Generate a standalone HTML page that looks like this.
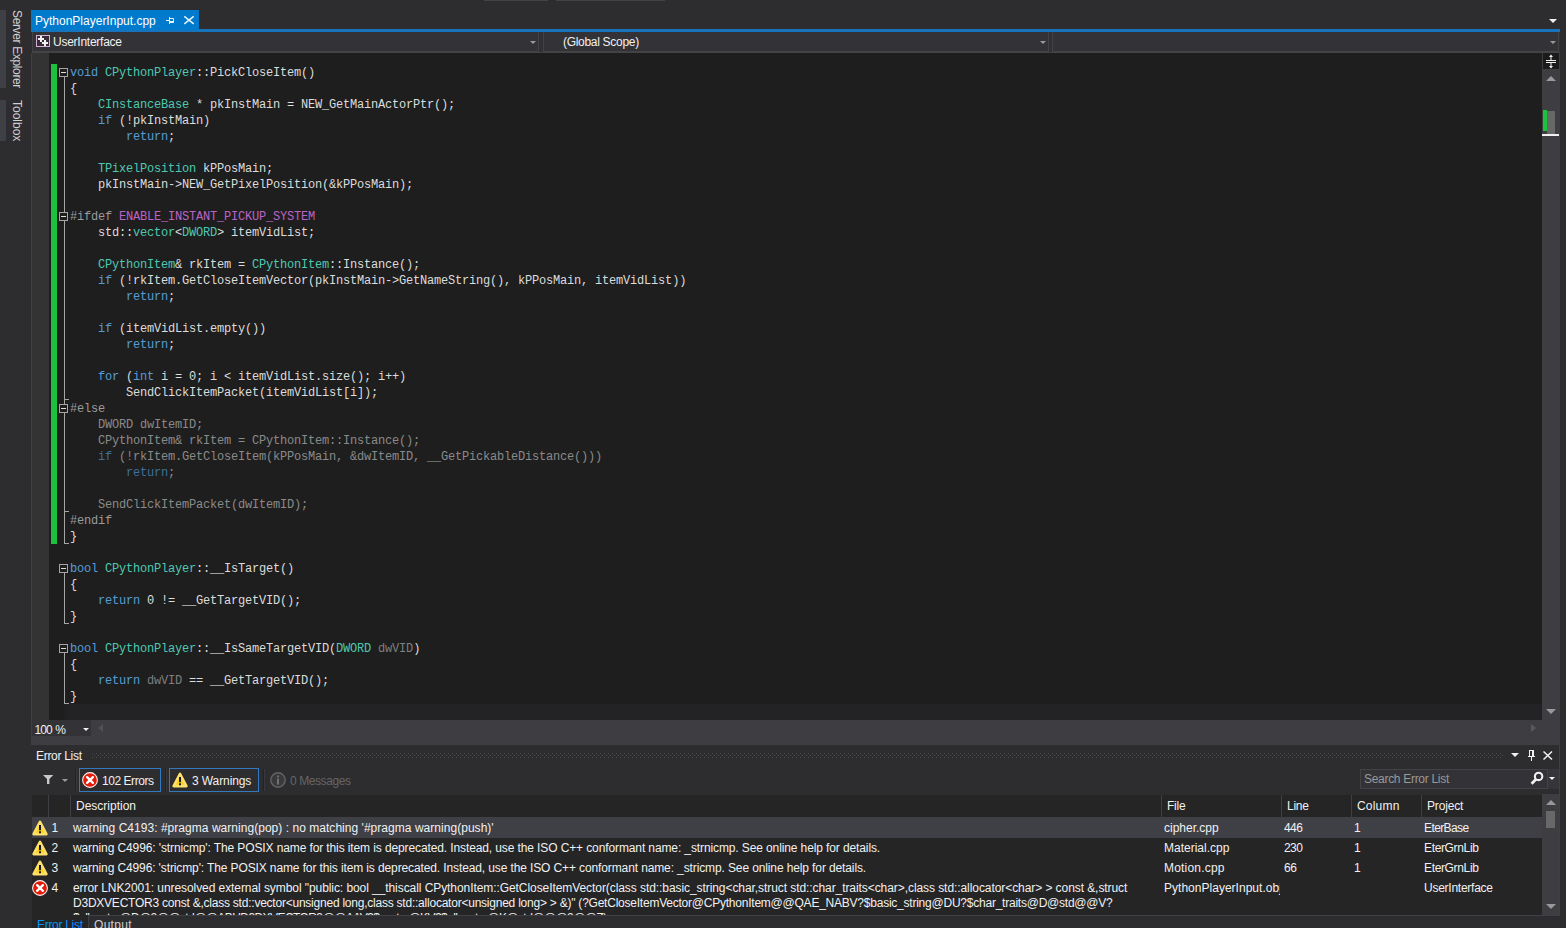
<!DOCTYPE html>
<html lang="en">
<head>
<meta charset="utf-8">
<title>PythonPlayerInput.cpp</title>
<style>
*{box-sizing:border-box;margin:0;padding:0}
html,body{width:1566px;height:928px;overflow:hidden;background:#2d2d30}
body{position:relative;font-family:"Liberation Sans",sans-serif;font-size:12px;color:#f1f1f1}
.abs{position:absolute}
.ui{position:absolute;white-space:nowrap;line-height:16px;font-size:12px;color:#f1f1f1}
/* side strip */
.sidebar{position:absolute;left:0;width:6px;background:#3f3f46}
.vtext{position:absolute;transform-origin:0 0;transform:rotate(90deg);white-space:nowrap;font-size:12px;line-height:16px;color:#d0d0d0}
/* editor */
#editor{position:absolute;left:49px;top:53px;width:1493px;height:667px;background:#1e1e1e;overflow:hidden}
#margin{position:absolute;left:31px;top:53px;width:18px;height:667px;background:#333333;border-left:1px solid #3f3f46}
.code{position:absolute;left:21px;top:12px;font-family:"Liberation Mono",monospace;font-size:12px;letter-spacing:-0.2px;line-height:16px;color:#dcdcdc;white-space:pre}
.code div{height:16px}
.k{color:#569cd6}.t{color:#4ec9b0}.m{color:#bd63c5}.g{color:#9b9b9b}.p{color:#7f7f7f}
.ia{color:#8a8a8a}.ia .k{color:#3f6f9a}
.ob{position:absolute;width:9px;height:9px;border:1px solid #a5a5a5;background:#1e1e1e}
.ob:after{content:"";position:absolute;left:1px;top:3px;width:5px;height:1px;background:#dcdcdc}
.ol{position:absolute;width:1px;background:#a5a5a5}

.tri-d{position:absolute;width:0;height:0;border-left:4px solid transparent;border-right:4px solid transparent;border-top:4px solid #999}
.tri-u{position:absolute;width:0;height:0;border-left:5px solid transparent;border-right:5px solid transparent;border-bottom:5px solid #999}
.combo{position:absolute;top:32px;height:20px;background:#333337;border:1px solid #434346;border-top:none}
.sb{position:absolute;background:#3e3e42}
.thumb{position:absolute;background:#686868}

#el{position:absolute;left:31px;top:745px;width:1529px;height:171px;background:#2d2d30;border-right:1px solid #3f3f46}
.btn{position:absolute;top:768px;height:24px;border:1px solid #3379c0;background:#2d2d30}
.vsep{position:absolute;width:1px;background:#3f3f46}
#list{position:absolute;left:32px;top:795px;width:1510px;height:120px;background:#252526;overflow:hidden}
.hdr{position:absolute;top:0;height:22px;border-left:1px solid #3f3f46}
.row{position:absolute;left:0;width:1510px}
.cell{position:absolute;white-space:nowrap;font-size:12px;line-height:15px;color:#f1f1f1}
</style>
</head>
<body>
<!-- left auto-hide strip -->
<div class="sidebar" style="top:10px;height:78px"></div>
<div class="sidebar" style="top:100px;height:41px"></div>
<div class="vtext" style="left:25px;top:10px;letter-spacing:-0.36px">Server Explorer</div>
<div class="vtext" style="left:25px;top:100px">Toolbox</div>

<!-- toolbar combo bottoms -->
<div class="abs" style="left:484px;top:0;width:64px;height:1px;background:#434346"></div>
<div class="abs" style="left:556px;top:0;width:109px;height:1px;background:#434346"></div>

<!-- document tab -->
<div class="abs" style="left:31px;top:29px;width:1529px;height:3px;background:#1873bd"></div>
<div class="abs" id="tab" style="left:31px;top:10px;width:168px;height:20px;background:#007acc"></div>
<div class="ui" id="tabtxt" style="left:35px;top:13px;color:#fff">PythonPlayerInput.cpp</div>


<!-- tab icons -->
<svg class="abs" style="left:164px;top:14px" width="34" height="13" viewBox="0 0 34 13">
<g fill="none" stroke="#e6f3fb" stroke-width="1">
<path d="M2 6.5H5.5M5.5 3V10M5.5 4.5H9.5V8.5H5.5M5.5 7.5H9.5"/>
<path d="M20.3 2.3L29.7 9.9M29.7 2.3L20.3 9.9" stroke-width="1.5"/>
</g></svg>
<!-- tab well overflow arrow -->
<div class="tri-d" style="left:1549px;top:19px;border-top-color:#f1f1f1"></div>
<!-- nav bar -->
<div class="abs" id="nav" style="left:32px;top:32px;width:1528px;height:21px;background:#313135;border-bottom:1px solid #434346"></div>
<div class="combo" style="left:32px;width:507px"></div>
<div class="combo" style="left:543px;width:506px"></div>
<div class="combo" style="left:1052px;width:507px"></div>
<div class="tri-d" style="left:530px;top:41px;border-width:3.5px 3.5px 0 3.5px"></div>
<div class="tri-d" style="left:1040px;top:41px;border-width:3.5px 3.5px 0 3.5px"></div>
<div class="tri-d" style="left:1550px;top:41px;border-width:3.5px 3.5px 0 3.5px"></div>
<!-- project icon -->
<svg class="abs" style="left:36px;top:35px" width="14" height="12" viewBox="0 0 14 12">
<rect x="0.5" y="0.5" width="13" height="11" fill="#392b3a" stroke="#d3b0d6"/>
<path d="M4 1h2v2h2v2h-2v2h-2v-2h-2v-2h2zM8 5h2v2h2v2h-2v2h-2v-2h-2v-2h2z" fill="#f1f1f1"/>
</svg>
<div class="ui" style="left:53px;top:34px;letter-spacing:-0.25px">UserInterface</div>
<div class="ui" style="left:563px;top:34px;letter-spacing:-0.3px">(Global Scope)</div>

<!-- editor -->
<div id="margin"></div>
<div id="editor">
<div class="abs" style="left:2px;top:11px;width:6px;height:480px;background:#1cc23d"></div>
<div class="ol" style="left:15px;top:24px;height:467px"></div>
<div class="ob" style="left:10px;top:15px"></div>
<div class="ob" style="left:10px;top:159px"></div>
<div class="ob" style="left:10px;top:351px"></div>
<div class="ol" style="left:15px;top:346px;width:5px;height:1px"></div>
<div class="ol" style="left:15px;top:458px;width:5px;height:1px"></div>
<div class="ol" style="left:15px;top:490px;width:5px;height:1px"></div>
<div class="ol" style="left:15px;top:520px;height:51px"></div>
<div class="ob" style="left:10px;top:511px"></div>
<div class="ol" style="left:15px;top:570px;width:5px;height:1px"></div>
<div class="ol" style="left:15px;top:600px;height:51px"></div>
<div class="ob" style="left:10px;top:591px"></div>
<div class="ol" style="left:15px;top:650px;width:5px;height:1px"></div>
<div class="abs" style="left:13px;top:651px;width:1480px;height:16px;background:linear-gradient(90deg,#1e1e1e 0,#232325 8px)"></div>
<div class="code" id="code"><div><span class="k">void</span> <span class="t">CPythonPlayer</span>::PickCloseItem()</div><div>{</div><div>    <span class="t">CInstanceBase</span> * pkInstMain = NEW_GetMainActorPtr();</div><div>    <span class="k">if</span> (!pkInstMain)</div><div>        <span class="k">return</span>;</div><div></div><div>    <span class="t">TPixelPosition</span> kPPosMain;</div><div>    pkInstMain-&gt;NEW_GetPixelPosition(&amp;kPPosMain);</div><div></div><div><span class="g">#ifdef</span> <span class="m">ENABLE_INSTANT_PICKUP_SYSTEM</span></div><div>    std::<span class="t">vector</span>&lt;<span class="t">DWORD</span>&gt; itemVidList;</div><div></div><div>    <span class="t">CPythonItem</span>&amp; rkItem = <span class="t">CPythonItem</span>::Instance();</div><div>    <span class="k">if</span> (!rkItem.GetCloseItemVector(pkInstMain-&gt;GetNameString(), kPPosMain, itemVidList))</div><div>        <span class="k">return</span>;</div><div></div><div>    <span class="k">if</span> (itemVidList.empty())</div><div>        <span class="k">return</span>;</div><div></div><div>    <span class="k">for</span> (<span class="k">int</span> i = 0; i &lt; itemVidList.size(); i++)</div><div>        SendClickItemPacket(itemVidList[i]);</div><div><span class="g">#else</span></div><div class="ia">    DWORD dwItemID;</div><div class="ia">    CPythonItem&amp; rkItem = CPythonItem::Instance();</div><div class="ia">    <span class="k">if</span> (!rkItem.GetCloseItem(kPPosMain, &amp;dwItemID, __GetPickableDistance()))</div><div class="ia">        <span class="k">return</span>;</div><div></div><div class="ia">    SendClickItemPacket(dwItemID);</div><div><span class="g">#endif</span></div><div>}</div><div></div><div><span class="k">bool</span> <span class="t">CPythonPlayer</span>::__IsTarget()</div><div>{</div><div>    <span class="k">return</span> 0 != __GetTargetVID();</div><div>}</div><div></div><div><span class="k">bool</span> <span class="t">CPythonPlayer</span>::__IsSameTargetVID(<span class="t">DWORD</span> <span class="p">dwVID</span>)</div><div>{</div><div>    <span class="k">return</span> <span class="p">dwVID</span> == __GetTargetVID();</div><div>}</div></div>
</div>

<!-- vertical scrollbar -->
<div class="sb" style="left:1542px;top:53px;width:18px;height:667px"></div>
<div class="abs" style="left:1543px;top:53px;width:16px;height:16px;background:#1b1b1c"></div>
<svg class="abs" style="left:1543px;top:53px" width="16" height="16" viewBox="0 0 16 16">
<g stroke="#f1f1f1" fill="#f1f1f1">
<path d="M3 7.5H13M3 9.5H13" stroke-width="1"/>
<path d="M8 3V7M8 10V14" stroke-width="1"/>
<path d="M8 1.5L10 4H6ZM8 15.5L10 13H6Z" stroke="none"/>
</g></svg>
<div class="tri-u" style="left:1546px;top:76px"></div>
<div class="thumb" style="left:1547px;top:111px;width:8px;height:23px"></div>
<div class="abs" style="left:1543px;top:110px;width:4px;height:21px;background:#1cc23d"></div>
<div class="abs" style="left:1542px;top:134px;width:17px;height:2px;background:#f1f1f1"></div>
<div class="tri-d" style="left:1546px;top:709px;border-left-width:5px;border-right-width:5px;border-top-width:5px"></div>

<!-- bottom bar: zoom + hscroll -->
<div class="sb" style="left:31px;top:720px;width:1529px;height:25px"></div>
<div class="abs" style="left:32px;top:720px;width:59px;height:16px;background:#333337"></div>
<div class="ui" style="left:34.5px;top:722px;letter-spacing:-0.9px;word-spacing:1px">100 %</div>
<div class="tri-d" style="left:83px;top:728px;border-width:3px 3px 0 3px;border-top-color:#f1f1f1"></div>
<div class="abs" style="left:98px;top:724px;width:0;height:0;border-top:4px solid transparent;border-bottom:4px solid transparent;border-right:5px solid #505055"></div>
<div class="abs" style="left:1531px;top:724px;width:0;height:0;border-top:4.5px solid transparent;border-bottom:4.5px solid transparent;border-left:5px solid #58585e"></div>

<!-- Error List tool window -->
<div id="el"></div>
<div class="ui" style="left:36px;top:748px;letter-spacing:-0.3px">Error List</div>
<svg class="abs" style="left:92px;top:753px" width="1412" height="5"><defs><pattern id="dots" width="4" height="4" patternUnits="userSpaceOnUse"><rect x="0" y="0" width="1" height="1" fill="#48484d"/><rect x="2" y="2" width="1" height="1" fill="#48484d"/></pattern></defs><rect width="1412" height="5" fill="url(#dots)"/></svg>
<div class="tri-d" style="left:1511px;top:753px;border-top-color:#f1f1f1"></div>
<svg class="abs" style="left:1525px;top:749px" width="30" height="13" viewBox="0 0 30 13"><g fill="none" stroke="#f1f1f1"><path d="M4 1.5H9M4.5 1.5V7.5M7.5 1.5V7.5M8.5 1.5V7.5M3 7.5H10M6.5 7.5V12"/><path d="M18.5 2.5L27 10.5M27 2.5L18.5 10.5" stroke-width="1.5"/></g></svg>

<!-- toolbar -->
<svg class="abs" style="left:43px;top:774px" width="11" height="11" viewBox="0 0 11 11"><path d="M0 1H10.3L6.4 5V10H4V5Z" fill="#c8c8c8"/></svg>
<div class="tri-d" style="left:62px;top:779px;border-left-width:3px;border-right-width:3px;border-top-width:3px"></div>
<div class="vsep" style="left:75px;top:769px;height:22px;background:#222224"></div><div class="vsep" style="left:76px;top:769px;height:22px;background:#39393d"></div>
<div class="btn" style="left:79px;width:82px"></div>
<svg class="abs" style="left:82px;top:772px" width="16" height="16" viewBox="0 0 16 16"><circle cx="8" cy="8" r="7.4" fill="#e21c08" stroke="#fbeeee" stroke-width="1.1"/><path d="M5.1 5.1L10.9 10.9M10.9 5.1L5.1 10.9" stroke="#fff" stroke-width="2.3" stroke-linecap="round"/></svg>
<div class="ui" style="left:102px;top:773px;letter-spacing:-0.45px">102 Errors</div>
<div class="vsep" style="left:165px;top:769px;height:22px;background:#222224"></div><div class="vsep" style="left:166px;top:769px;height:22px;background:#39393d"></div>
<div class="btn" style="left:169px;width:90px"></div>
<svg class="abs" style="left:172px;top:772px" width="16" height="16" viewBox="0 0 16 16"><path d="M8 1.9L14.4 14.1H1.6Z" fill="#fcd116" stroke="#fddf6a" stroke-width="2.6" stroke-linejoin="round"/><path d="M7 5h2v5.2h-2zM7 11.3h2v2h-2z" fill="#1b1b1c"/></svg>
<div class="ui" style="left:192px;top:773px;letter-spacing:-0.1px">3 Warnings</div>
<div class="vsep" style="left:263px;top:769px;height:22px;background:#222224"></div><div class="vsep" style="left:264px;top:769px;height:22px;background:#39393d"></div>
<svg class="abs" style="left:270px;top:772px" width="16" height="16" viewBox="0 0 16 16"><circle cx="8" cy="8" r="7.2" fill="#39393c" stroke="#646466" stroke-width="1.4"/><path d="M7.1 6.4h1.8v6h-1.8zM7.1 3.4h1.8v1.8h-1.8z" fill="#77777a"/></svg>
<div class="ui" style="left:290px;top:773px;color:#656565;letter-spacing:-0.42px">0 Messages</div>
<!-- search box -->
<div class="abs" style="left:1360px;top:769px;width:188px;height:20px;background:#333337;border:1px solid #434346"></div>
<div class="ui" style="left:1364px;top:771px;color:#999;letter-spacing:-0.3px">Search Error List</div>
<svg class="abs" style="left:1530px;top:771px" width="14" height="15" viewBox="0 0 14 15"><circle cx="8.6" cy="5.4" r="3.7" fill="none" stroke="#f1f1f1" stroke-width="2.1"/><path d="M6.2 8L1.6 12.8" stroke="#f1f1f1" stroke-width="2.7"/></svg>
<div class="abs" style="left:1548px;top:769px;width:11px;height:20px;background:#36363a"></div>
<div class="tri-d" style="left:1548.5px;top:776.5px;border-width:3.5px 3.2px 0 3.2px;border-top-color:#f1f1f1"></div>

<!-- list -->
<div id="list">
<div class="hdr" style="left:16px;width:22px"></div>
<div class="hdr" style="left:38px;width:1091px"><span class="cell" style="left:5px;top:4px">Description</span></div>
<div class="hdr" style="left:1129px;width:120px"><span class="cell" style="left:5px;top:4px;letter-spacing:-0.25px">File</span></div>
<div class="hdr" style="left:1249px;width:70px"><span class="cell" style="left:5px;top:4px;letter-spacing:-0.25px">Line</span></div>
<div class="hdr" style="left:1319px;width:70px"><span class="cell" style="left:5px;top:4px;letter-spacing:0.2px">Column</span></div>
<div class="hdr" style="left:1389px;width:121px"><span class="cell" style="left:5px;top:4px;letter-spacing:-0.15px">Project</span></div>
<div class="row" style="top:22px;height:21px;background:#3f3f46"></div>
<svg class="abs" style="left:0px;top:25px" width="16" height="16" viewBox="0 0 16 16"><path d="M8 1.9L14.4 14.1H1.6Z" fill="#fcd116" stroke="#fddf6a" stroke-width="2.6" stroke-linejoin="round"/><path d="M7 5h2v5.2h-2zM7 11.3h2v2h-2z" fill="#1b1b1c"/></svg>
<span class="cell" style="left:19.4px;top:26px">1</span>
<span class="cell" id="r1" style="left:41px;top:26px;letter-spacing:0.035px">warning C4193: #pragma warning(pop) : no matching '#pragma warning(push)'</span>
<span class="cell" style="left:1132px;top:26px">cipher.cpp</span>
<span class="cell" style="left:1252px;top:26px;letter-spacing:-0.6px">446</span>
<span class="cell" style="left:1322px;top:26px">1</span>
<span class="cell" style="left:1392px;top:26px;letter-spacing:-0.6px">EterBase</span>
<svg class="abs" style="left:0px;top:45px" width="16" height="16" viewBox="0 0 16 16"><path d="M8 1.9L14.4 14.1H1.6Z" fill="#fcd116" stroke="#fddf6a" stroke-width="2.6" stroke-linejoin="round"/><path d="M7 5h2v5.2h-2zM7 11.3h2v2h-2z" fill="#1b1b1c"/></svg>
<span class="cell" style="left:19.4px;top:46px">2</span>
<span class="cell" id="r2" style="left:41px;top:46px;letter-spacing:-0.112px">warning C4996: 'strnicmp': The POSIX name for this item is deprecated. Instead, use the ISO C++ conformant name: _strnicmp. See online help for details.</span>
<span class="cell" style="left:1132px;top:46px">Material.cpp</span>
<span class="cell" style="left:1252px;top:46px;letter-spacing:-0.6px">230</span>
<span class="cell" style="left:1322px;top:46px">1</span>
<span class="cell" style="left:1392px;top:46px;letter-spacing:-0.35px">EterGrnLib</span>
<svg class="abs" style="left:0px;top:65px" width="16" height="16" viewBox="0 0 16 16"><path d="M8 1.9L14.4 14.1H1.6Z" fill="#fcd116" stroke="#fddf6a" stroke-width="2.6" stroke-linejoin="round"/><path d="M7 5h2v5.2h-2zM7 11.3h2v2h-2z" fill="#1b1b1c"/></svg>
<span class="cell" style="left:19.4px;top:66px">3</span>
<span class="cell" id="r3" style="left:41px;top:66px;letter-spacing:-0.118px">warning C4996: 'stricmp': The POSIX name for this item is deprecated. Instead, use the ISO C++ conformant name: _stricmp. See online help for details.</span>
<span class="cell" style="left:1132px;top:66px;letter-spacing:0.2px">Motion.cpp</span>
<span class="cell" style="left:1252px;top:66px;letter-spacing:-0.4px">66</span>
<span class="cell" style="left:1322px;top:66px">1</span>
<span class="cell" style="left:1392px;top:66px;letter-spacing:-0.35px">EterGrnLib</span>
<svg class="abs" style="left:0px;top:85px" width="16" height="16" viewBox="0 0 16 16"><circle cx="8" cy="8" r="7.4" fill="#e21c08" stroke="#fbeeee" stroke-width="1.1"/><path d="M5.1 5.1L10.9 10.9M10.9 5.1L5.1 10.9" stroke="#fff" stroke-width="2.3" stroke-linecap="round"/></svg>
<span class="cell" style="left:19.4px;top:86px">4</span>
<span class="cell" id="r4a" style="left:41px;top:86px;letter-spacing:-0.072px">error LNK2001: unresolved external symbol "public: bool __thiscall CPythonItem::GetCloseItemVector(class std::basic_string&lt;char,struct std::char_traits&lt;char&gt;,class std::allocator&lt;char&gt; &gt; const &amp;,struct</span>
<span class="cell" id="r4b" style="left:41px;top:100.5px;letter-spacing:-0.230px">D3DXVECTOR3 const &amp;,class std::vector&lt;unsigned long,class std::allocator&lt;unsigned long&gt; &gt; &amp;)" (?GetCloseItemVector@CPythonItem@@QAE_NABV?$basic_string@DU?$char_traits@D@std@@V?</span>
<span class="cell" id="r4c" style="left:41px;top:115.5px;letter-spacing:-0.576px">$allocator@D@2@@std@@ABUD3DXVECTOR3@@AAV?$vector@KV?$allocator@K@std@@@2@@Z)</span>
<span class="cell" style="left:1132px;top:86px;width:116px;overflow:hidden;letter-spacing:0.02px">PythonPlayerInput.obj</span>
<span class="cell" style="left:1392px;top:86px;letter-spacing:-0.25px">UserInterface</span>
</div>
<!-- list scrollbar -->
<div class="sb" style="left:1542px;top:794px;width:17px;height:121px"></div>
<div class="tri-u" style="left:1546px;top:800px"></div>
<div class="thumb" style="left:1546px;top:811px;width:9px;height:17px"></div>
<div class="tri-d" style="left:1546px;top:904px;border-left-width:5px;border-right-width:5px;border-top-width:5px"></div>
<!-- bottom tabs -->
<div class="abs" style="left:88px;top:915px;width:1472px;height:1px;background:#3f3f46"></div>
<div class="abs" style="left:88px;top:915px;width:1px;height:13px;background:#3f3f46"></div>
<div class="abs" style="left:32px;top:915px;width:56px;height:13px;background:#252526"></div>
<div class="ui" style="left:37px;top:917px;color:#0097fb;letter-spacing:-0.3px">Error List</div>
<div class="ui" style="left:94px;top:917px;color:#d0d0d0;letter-spacing:0.3px">Output</div>

</body>
</html>
